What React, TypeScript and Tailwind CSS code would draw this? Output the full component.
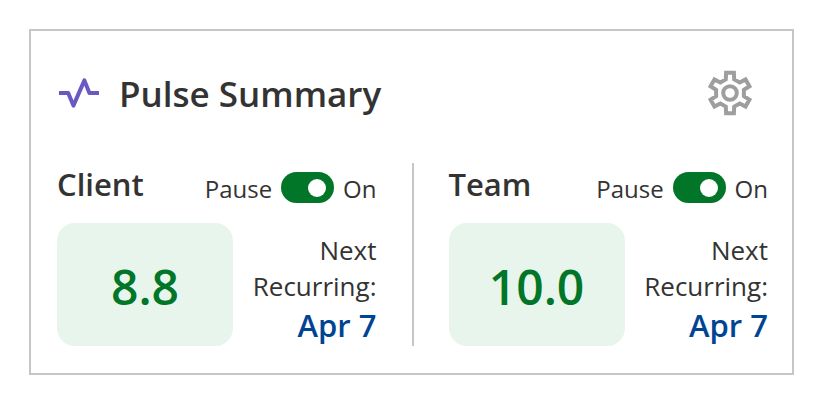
import { useState } from "react";

type PulseType = {
  label: string;
  score: string;
  nextDate: string;
};

const pulses: PulseType[] = [
  { label: "Client", score: "8.8", nextDate: "Apr 7" },
  { label: "Team", score: "10.0", nextDate: "Apr 7" },
];

const PulseIcon = () => (
  <svg width="43" height="32" viewBox="0 0 43 32" fill="none" aria-hidden="true">
    <path
      d="M2 16H11.2L16.4 28.6L27.4 3.4L32.4 16H42"
      stroke="#6b59c3"
      strokeWidth="4"
      strokeLinejoin="round"
    />
  </svg>
);

const GearIcon = () => {
  // one tooth, repeated every 60 degrees around the centre
  const tooth = [
    [-4.2, -13.6],
    [-3.9, -20.2],
    [3.9, -20.2],
    [4.2, -13.6],
  ];
  const points = [0, 60, 120, 180, 240, 300]
    .flatMap((deg) => {
      const a = (deg * Math.PI) / 180;
      return tooth.map(
        ([x, y]) =>
          `${(x * Math.cos(a) - y * Math.sin(a)).toFixed(2)},${(x * Math.sin(a) + y * Math.cos(a)).toFixed(2)}`
      );
    })
    .join(" ");

  return (
    <svg width="46" height="46" viewBox="-23 -23 46 46" fill="none" stroke="#9e9e9e" strokeWidth="4" aria-hidden="true">
      <polygon points={points} />
      <circle r="6.8" />
    </svg>
  );
};

const PulseToggle = ({ label }: { label: string }) => {
  const [on, setOn] = useState(true);

  return (
    <div className="flex items-start gap-[9px] text-2xl leading-[34px]">
      <span>Pause</span>
      <button
        type="button"
        role="switch"
        aria-checked={on}
        aria-label={`${label} pulse`}
        onClick={() => setOn(!on)}
        className={`flex h-[31px] w-[53px] items-center rounded-full px-2 ${
          on ? "justify-end bg-[#027628]" : "justify-start bg-[#9e9e9e]"
        }`}
      >
        <span className="size-[18px] rounded-full bg-white" />
      </button>
      <span>On</span>
    </div>
  );
};

const PulsePanel = ({ label, score, nextDate }: PulseType) => (
  <section className="flex flex-1 flex-col">
    <div className="flex items-start justify-between pb-[17px]">
      <h2 className="text-[31px] leading-[42px] font-semibold">{label}</h2>
      <div className="pt-[9px]">
        <PulseToggle label={label} />
      </div>
    </div>
    <div className="flex items-stretch justify-between">
      <div className="flex h-[123px] w-[176px] items-center justify-center rounded-[18px] bg-[#e8f5ec] pt-1 text-5xl font-semibold text-[#027628]">
        {score}
      </div>
      <div className="flex flex-col justify-end text-right text-[26px] leading-9">
        <span>Next</span>
        <span>Recurring:</span>
        <a href="#" className="text-[31px] leading-[42px] font-semibold text-[#004494]">
          {nextDate}
        </a>
      </div>
    </div>
  </section>
);

export default function App() {
  return (
    <main className="bg-white p-[29px] pr-7 font-['Open_Sans',sans-serif] text-[#333333]">
      <div className="border-2 border-[#c6c6c6] pt-[35px] pr-6 pb-[27px] pl-[26px]">
        <header className="flex items-center justify-between pr-[15px]">
          <div className="flex items-center gap-[19px]">
            <PulseIcon />
            <h1 className="pt-0.5 text-[35px] leading-[52px] font-semibold">Pulse Summary</h1>
          </div>
          <button type="button" aria-label="Settings">
            <GearIcon />
          </button>
        </header>
        <div className="mt-[43px] flex gap-[35px]">
          <PulsePanel {...pulses[0]} />
          <div className="w-0.5 bg-[#c6c6c6]" />
          <PulsePanel {...pulses[1]} />
        </div>
      </div>
    </main>
  );
}
